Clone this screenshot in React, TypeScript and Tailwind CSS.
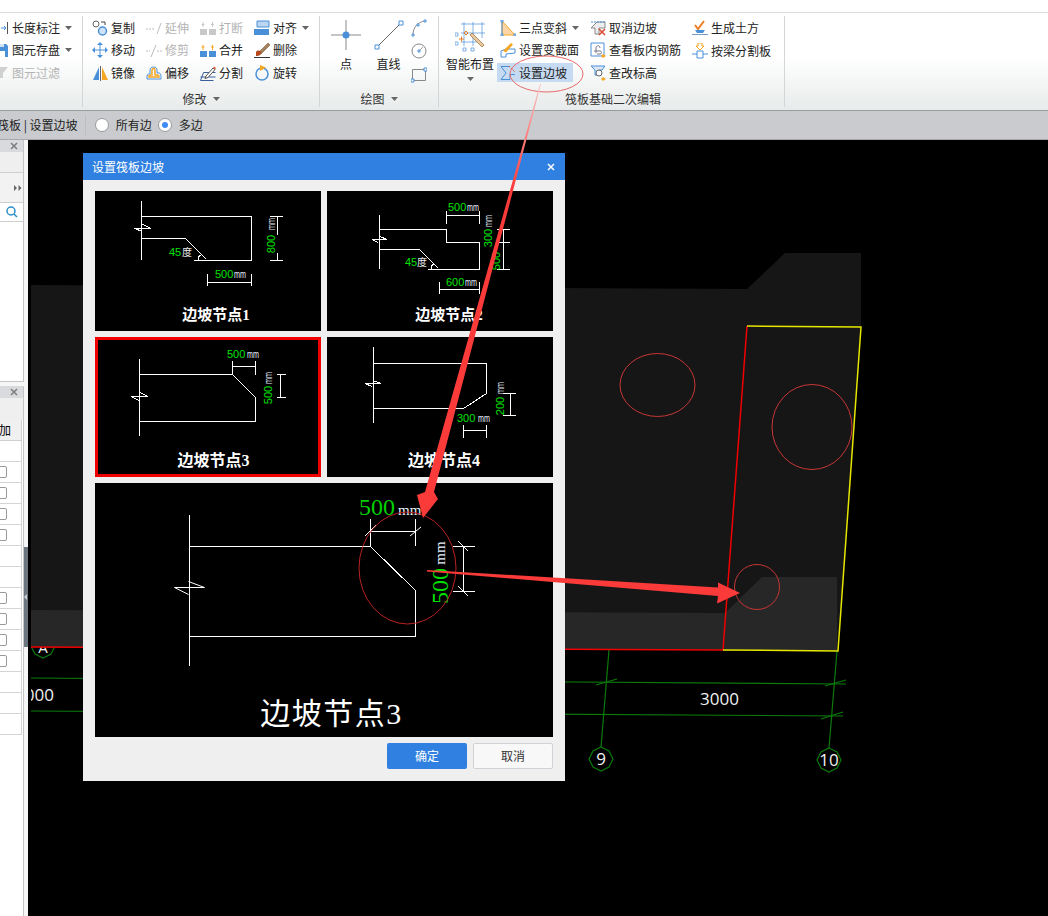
import React from "react";

const BLUE = "#4a90d9";
const ORANGE = "#f5a623";
const GRAY = "#bdbdbd";

const Ic = ({ children }: { children: React.ReactNode }) => (
  <svg viewBox="0 0 16 16" className="w-4 h-4 shrink-0" fill="none" strokeWidth="1">
    {children}
  </svg>
);

const Caret = () => (
  <svg viewBox="0 0 7 4" className="w-[7px] h-[4px] shrink-0">
    <path d="M0 0h7L3.5 4z" fill="#666" />
  </svg>
);

const icons: Record<string, React.ReactNode> = {
  length: (
    <Ic>
      <path d="M8 8h5M11 6l2 2-2 2" stroke={BLUE} />
      <path d="M14.500 2v12" stroke="#555" />
    </Ic>
  ),
  save: (
    <Ic>
      <path d="M1 2h12l2 2v11H1z" fill={BLUE} />
      <path d="M4 9h8v6H4z" fill="#fff" />
      <path d="M5 2h6v3H5z" fill="#cfe2f7" />
    </Ic>
  ),
  filter: (
    <Ic>
      <path d="M1 2h14l-5 6v5H7V8z" fill="#d0d0d0" />
    </Ic>
  ),
  copy: (
    <Ic>
      <circle cx="4" cy="4" r="3" stroke="#666" fill="#fff" />
      <circle cx="10.500" cy="11" r="4" stroke={BLUE} strokeWidth="1.500" fill="#cfe2f7" />
      <path d="M9 2h4v3" stroke="#444" />
    </Ic>
  ),
  move: (
    <Ic>
      <path d="M2 8h12M8 2v12" stroke={BLUE} />
      <path d="M8 0l3 3H5zM8 16l3-3H5zM0 8l3-3v6zM16 8l-3-3v6z" fill={BLUE} />
    </Ic>
  ),
  mirror: (
    <Ic>
      <path d="M7 2v13L1 15z" fill={BLUE} />
      <path d="M8.500 1v15" stroke="#666" />
      <path d="M10 2v13h6z" fill={ORANGE} />
    </Ic>
  ),
  extend: (
    <Ic>
      <path d="M0 9h9" stroke={GRAY} strokeDasharray="2 1" />
      <path d="M11 14L15 3" stroke={GRAY} />
    </Ic>
  ),
  trim: (
    <Ic>
      <path d="M0 9h4M11 9h5" stroke={GRAY} strokeDasharray="2 1" />
      <path d="M5 15L10 3" stroke={GRAY} />
    </Ic>
  ),
  offset: (
    <Ic>
      <path d="M1 14v-3c0-2 2-2 3-2V5c0-4 7-4 7 0v3h2c2 0 2 3 2 6z" stroke={BLUE} />
      <path d="M3 12v-1c0-1 2-1 3-1V5c0-2 3-2 3 0v5h3c1 0 1 1 1 2z" stroke={ORANGE} strokeWidth="1.500" />
    </Ic>
  ),
  breakIc: (
    <Ic>
      <path d="M0 9h7v6H0zM9 9h7v6H9z" fill="#c8c8c8" />
      <path d="M3 2v5M1.500 4.500h3M12.500 2v5M11 4.500h3" stroke="#c8c8c8" />
    </Ic>
  ),
  merge: (
    <Ic>
      <path d="M0 9h7v6H0zM9 9h7v6H9z" fill={BLUE} />
      <path d="M3 3v5M1.500 5h3M12.500 3v5M11 5h3" stroke={ORANGE} />
    </Ic>
  ),
  split: (
    <Ic>
      <path d="M3.500 7.500h12M.5 15.500h13M.5 15.500l3-8M.5 12l15 0" stroke="#3b5e9c" />
      <path d="M6 11l7-8 2 1.500-7 8-3 1z" fill="#fff" stroke="#555" />
      <path d="M13 3l1-1.500 2 1.500-1 1.500z" fill="#e05a3a" />
    </Ic>
  ),
  align: (
    <Ic>
      <path d="M3 1h12v6H3z" fill="#bcd5f0" stroke={BLUE} />
      <path d="M0 9h15v6H0z" fill={BLUE} />
    </Ic>
  ),
  erase: (
    <Ic>
      <path d="M5 10L14 1l2 2-9 9z" fill="#a5805a" stroke="#6a4a2a" strokeWidth="0.500" />
      <path d="M2 10c1-2 4-2 5 0s-1 4-5 4z" fill="#b84a20" />
      <path d="M0 15.500h16" stroke="#333" />
    </Ic>
  ),
  rotate: (
    <Ic>
      <circle cx="8" cy="9" r="6" stroke={BLUE} strokeWidth="1.500" />
      <path d="M6 0l6 2.500L6 6z" fill={ORANGE} />
    </Ic>
  ),
  threePt: (
    <Ic>
      <path d="M2 1v14h13z" fill="#fbd5a5" stroke={ORANGE} />
      <path d="M1 0h2v2H1zM1 14h2v2H1zM14 14h2v2h-2z" fill="#fff" stroke={BLUE} />
      <path d="M2 2v12" stroke={BLUE} />
    </Ic>
  ),
  section: (
    <Ic>
      <path d="M1 15V9l5-2h9v4l-9 1v3z" stroke={BLUE} />
      <path d="M3 9l8-8 2 1.500-7 8z" fill={ORANGE} />
    </Ic>
  ),
  slope: (
    <Ic>
      <path d="M1 1.500h9M1 1.500l5 6.500-5 6.500h9v-5h5" stroke={BLUE} />
      <path d="M9 1l6 6" stroke="#e05a3a" strokeDasharray="2 1" />
    </Ic>
  ),
  cancel: (
    <Ic>
      <path d="M1 8l6-6h8v6H9v6H5V8z" stroke="#888" fill="#eee" />
      <path d="M1 2h14" stroke={BLUE} strokeDasharray="2 1" />
      <path d="M9 9l6 6M15 9l-6 6" stroke="#d9482b" strokeWidth="1.500" />
    </Ic>
  ),
  rebar: (
    <Ic>
      <path d="M1 1h13v13H1z" stroke={BLUE} />
      <path d="M6 11V6c0-3 4-3 4 0M4 9h6c2 0 2 3 0 3H7" stroke="#778" />
      <path d="M13 12l3 2-3 2-2-2z" fill={ORANGE} />
    </Ic>
  ),
  elev: (
    <Ic>
      <path d="M1 1h14l-3 4H9v5H5V5z" stroke={BLUE} fill="#dde8f5" />
      <circle cx="9" cy="8" r="3" stroke="#666" fill="#fff" />
      <path d="M13 12l3 2-3 2-2-2z" fill={ORANGE} />
    </Ic>
  ),
  earth: (
    <Ic>
      <path d="M3 5l3 4 6-8" stroke="#ef7d22" strokeWidth="2" />
      <path d="M3 10h10l-2 3H5z" fill={BLUE} />
      <path d="M0 14.500h16" stroke="#7a99c0" />
    </Ic>
  ),
  beam: (
    <Ic>
      <path d="M6 0h4v3h2l-4 4-4-4h2z" fill="#fff" stroke={ORANGE} />
      <path d="M0 11h16" stroke={BLUE} />
      <path d="M5 8h6v7H5z" fill="#fff" stroke={BLUE} />
    </Ic>
  ),
};

type ItemProps = {
  icon: string;
  label: string;
  off?: boolean;
  caret?: boolean;
  active?: boolean;
};

const Item = ({ icon, label, off, caret, active }: ItemProps) => (
  <div className="h-[22px] last:h-[23px] flex items-center">
    <div
      className={
        active
          ? "flex items-center gap-[3px] h-[19px] w-[76px] -ml-[3px] pl-[3px] bg-[#c6daf1]"
          : "flex items-center gap-[3px]"
      }
    >
      {icons[icon]}
      <span className={off ? "text-[#b4b4b4] whitespace-nowrap" : "whitespace-nowrap"}>{label}</span>
      {caret && (
        <span className="ml-[2px]">
          <Caret />
        </span>
      )}
    </div>
  </div>
);

const Group = ({
  width,
  title,
  caret,
  shift,
  children,
}: {
  width: string;
  title: string;
  caret?: boolean;
  shift?: boolean;
  children: React.ReactNode;
}) => (
  <div className={`${width} my-[3px] flex flex-col border-r border-[#d3d6d6] shrink-0`}>
    <div className="flex h-[68px] mt-[1px]">{children}</div>
    <div className={`flex-1 flex items-center justify-center gap-[6px] pt-[5px] text-[#333] ${shift ? "pl-[3px]" : ""}`}>
      <span>{title}</span>
      {caret && <Caret />}
    </div>
  </div>
);

const Ribbon = () => (
  <div className="h-[98px] flex bg-linear-to-b from-white from-45% to-[#e8ebeb] border-b border-[#9a9c9e] text-xs text-[#222]">
    <Group width="w-[83px]" title="">
      <div className="-ml-[7px]">
        <Item icon="length" label="长度标注" caret />
        <Item icon="save" label="图元存盘" caret />
        <Item icon="filter" label="图元过滤" off />
      </div>
    </Group>
    <Group width="w-[237px]" title="修改" caret>
      <div className="flex pl-[9px]">
        <div className="w-[54px]">
          <Item icon="copy" label="复制" />
          <Item icon="move" label="移动" />
          <Item icon="mirror" label="镜像" />
        </div>
        <div className="w-[54px]">
          <Item icon="extend" label="延伸" off />
          <Item icon="trim" label="修剪" off />
          <Item icon="offset" label="偏移" />
        </div>
        <div className="w-[54px]">
          <Item icon="breakIc" label="打断" off />
          <Item icon="merge" label="合并" />
          <Item icon="split" label="分割" />
        </div>
        <div className="w-[54px]">
          <Item icon="align" label="对齐" caret />
          <Item icon="erase" label="删除" />
          <Item icon="rotate" label="旋转" />
        </div>
      </div>
    </Group>
    <Group width="w-[119px]" title="绘图" caret>
      <div className="flex">
        <div className="w-[50px] flex flex-col items-center pt-[3px] pl-[2px]">
          <svg viewBox="0 0 30 30" className="w-[30px] h-[30px]" fill="none">
            <path d="M0 15h30M15 0v30" stroke="#8a8a8a" />
            <circle cx="15" cy="15" r="3.500" fill={BLUE} />
          </svg>
          <span className="mt-[6px]">点</span>
        </div>
        <div className="w-[37px] flex flex-col items-center pt-[3px]">
          <svg viewBox="0 0 30 30" className="w-[30px] h-[30px]" fill="none">
            <path d="M3 27L27 3" stroke="#666" />
            <path d="M1 25h4v4H1zM25 1h4v4h-4z" fill="#fff" stroke={BLUE} />
          </svg>
          <span className="mt-[6px]">直线</span>
        </div>
        <div className="flex flex-col pl-[4px] pt-[2px] gap-[5px]">
          <svg viewBox="0 0 16 18" className="w-4 h-[18px]" fill="none">
            <path d="M2 16C2 8 7 3 14 2" stroke="#888" />
            <path d="M1 15h2v2H1zM6 5h2v2H6zM13 1h2v2h-2z" fill="#fff" stroke={BLUE} />
          </svg>
          <svg viewBox="0 0 16 18" className="w-4 h-[18px]" fill="none">
            <circle cx="8" cy="9" r="7" stroke="#888" />
            <path d="M8 9l4-4" stroke="#aaa" />
            <path d="M7 8h2v2H7z" fill="#fff" stroke={BLUE} />
          </svg>
          <svg viewBox="0 0 16 18" className="w-4 h-[18px]" fill="none">
            <path d="M1.500 4.500h13v11h-13z" stroke="#888" />
            <path d="M0 14h3v3H0zM13 3h3v3h-3z" fill="#fff" stroke={BLUE} />
          </svg>
        </div>
      </div>
    </Group>
    <Group width="w-[346px]" title="筏板基础二次编辑" shift>
      <div className="flex">
        <div className="w-[58px] flex flex-col items-center pt-[5px] pl-[4px]">
          <svg viewBox="0 0 30 30" className="w-[30px] h-[30px] shrink-0" fill="none">
            <path d="M6 2h24M6 11h24M6 20h16M9 0v24M18 0v24M27 0v16" stroke={BLUE} strokeWidth="0.700" />
            <path d="M0 11h3v3H0zM0 20h3v3H0zM8 26h3v3H8zM16 26h3v3h-3z" stroke={BLUE} strokeWidth="0.700" />
            <path d="M15 13l12 12 2-2-12-12z" fill="#e8c9a0" stroke="#9a6a30" strokeWidth="0.700" />
            <path d="M11 9l2 2-2 2-2-2zM4 17h5M6.500 14.500v5" stroke="#ef7d22" />
          </svg>
          <span className="whitespace-nowrap mt-[4px]">智能布置</span>
          <div className="w-[7px] h-[4px] mt-[5px] shrink-0">
            <Caret />
          </div>
        </div>
        <div className="w-[93px] pl-[3px]">
          <Item icon="threePt" label="三点变斜" caret />
          <Item icon="section" label="设置变截面" />
          <Item icon="slope" label="设置边坡" active />
        </div>
        <div className="w-[102px]">
          <Item icon="cancel" label="取消边坡" />
          <Item icon="rebar" label="查看板内钢筋" />
          <Item icon="elev" label="查改标高" />
        </div>
        <div>
          <Item icon="earth" label="生成土方" />
          <Item icon="beam" label="按梁分割板" />
        </div>
      </div>
    </Group>
  </div>
);

const Radio = ({ on }: { on?: boolean }) => (
  <span className="w-[14px] h-[14px] rounded-full bg-white border border-[#9a9a9a] flex items-center justify-center shrink-0">
    {on && <span className="w-[6px] h-[6px] rounded-full bg-[#3f8cf0]" />}
  </span>
);

const OptionBar = () => (
  <div className="h-[29px] flex items-center bg-[#c9cbce] border-b border-[#a8a8a8] text-xs text-[#222]">
    <span className="-ml-[3px] whitespace-nowrap">筏板 | 设置边坡</span>
    <span className="ml-[7px] w-px h-[20px] bg-[#bcbec0]" />
    <span className="ml-[9px]">
      <Radio />
    </span>
    <span className="ml-[7px]">所有边</span>
    <span className="ml-[6px]">
      <Radio on />
    </span>
    <span className="ml-[7px]">多边</span>
  </div>
);

const Close = ({ color }: { color: string }) => (
  <svg viewBox="0 0 8 8" className="w-2 h-2" fill="none" stroke={color} strokeWidth="1.500">
    <path d="M1 1l6 6M7 1L1 7" />
  </svg>
);

const rowsWithBox = [false, true, true, true, true, false, false, true, true, true, true, false, false, false];

const Sidebar = () => (
  <div className="w-[28px] h-full shrink-0 flex bg-[#f6f6f7] text-xs">
    <div className="w-[24px] flex flex-col overflow-hidden">
      <div className="h-[242px] border-r border-b border-[#c4c4c4] bg-white flex flex-col">
        <div className="h-[12px] bg-[#d9dadd] flex items-center justify-end pr-[5px]">
          <Close color="#7d7d7d" />
        </div>
        <div className="h-[21px] bg-[#efefef] border-b border-[#cfcfcf]" />
        <div className="h-[30px] bg-[#f2f2f2] border-b border-[#cfcfcf] flex items-center justify-end pr-[1px]">
          <svg viewBox="0 0 8 6" className="w-2 h-[6px]">
            <path d="M0 0l3 3-3 3zM4.500 0l3 3-3 3z" fill="#666" />
          </svg>
        </div>
        <div className="h-[19px] border-b border-[#cfcfcf] flex items-center justify-end pr-[5px]">
          <svg viewBox="0 0 12 12" className="w-3 h-3" fill="none" stroke="#2a8fc9" strokeWidth="1.500">
            <circle cx="5" cy="5" r="4" />
            <path d="M8 8l3 3" />
          </svg>
        </div>
      </div>
      <div className="h-[4px]" />
      <div className="flex-1 border-r border-[#c4c4c4] bg-white flex flex-col">
        <div className="h-[12px] bg-[#d9dadd] flex items-center justify-end pr-[5px]">
          <Close color="#7d7d7d" />
        </div>
        <div className="h-[22px] bg-[#efefef]" />
        <div className="h-[21px] bg-[#f0f0f0] border-b border-r border-[#cfcfcf] flex items-center mr-[1px] overflow-hidden">
          <span className="-ml-[1px] whitespace-nowrap">加</span>
        </div>
        {rowsWithBox.map((box, i) => (
          <div key={i} className="h-[21px] border-b border-r border-[#d4d4d4] mr-[1px] flex items-center overflow-hidden">
            {box && <span className="-ml-[5px] w-[12px] h-[12px] rounded-[2px] border border-[#9a9a9a] bg-white shrink-0" />}
          </div>
        ))}
      </div>
    </div>
    <div className="w-[4px] pt-[407px]">
      <div className="h-[100px] bg-[#6b7681] flex items-center">
        <svg viewBox="0 0 4 6" className="w-1 h-[6px]">
          <path d="M3 0v6L0 3z" fill="#c9ced3" />
        </svg>
      </div>
    </div>
  </div>
);

const Model = () => (
  <svg viewBox="28 140 1020 776" className="w-full h-full block" fill="none">
    <g stroke="#0b7a0b" strokeWidth="1.200">
      <path d="M31 678L846 684M31 711L843 716" />
      <path d="M596 685l21-6M825 686l21-6M821 719l22-7" />
      <path d="M609 650L601 747M837 651L829 748" />
      <path d="M601 747l8 4 4 8-4 8-8 4-8-4-4-8 4-8zM829 748l8 4 4 8-4 8-8 4-8-4-4-8 4-8z" />
      <path d="M43 634l8 4 4 8-4 8-8 4-8-4-4-8 4-8z" />
    </g>
    <text x="43" y="653" fontSize="15" fill="#f0f0f0" textAnchor="middle" fontFamily="Open Sans, sans-serif">A</text>
    <path d="M31 285L747 289L785 253H861V327L838 651L723 650L31 647Z" fill="#161616" />
    <path d="M31 610L725 613L762 577H837V651L723 650L31 647Z" fill="#272727" />
    <path d="M31 647L723 650L747 326" stroke="#f00000" strokeWidth="1.500" />
    <path d="M747 326L861 327L838 651L723 650" stroke="#e6e600" strokeWidth="1.500" />
    <g stroke="#c93636" strokeWidth="1">
      <ellipse cx="657.500" cy="385" rx="37.500" ry="31.500" />
      <ellipse cx="812" cy="427" rx="40" ry="42.500" />
      <circle cx="757" cy="587" r="22.500" />
    </g>
    <g fill="#f0f0f0" fontFamily="Open Sans, sans-serif" textAnchor="middle">
      <text x="719.500" y="705" fontSize="17">3000</text>
      <text x="601" y="765" fontSize="17">9</text>
      <text x="829" y="766" fontSize="17">10</text>
      <text x="54" y="701" fontSize="17" textAnchor="end">000</text>
    </g>
    <path d="M28 140h3v776h-3z" fill="#000" />
  </svg>
);

const Mm = ({ x, y, big }: { x: number; y: number; big?: boolean }) =>
  big ? (
    <text x={x} y={y} fill="#e8f0ff" fontSize={15} fontFamily="Liberation Serif, serif">
      mm
    </text>
  ) : (
    <text x={x} y={y} fill="#e8f0ff" fontSize={10} textLength={12} lengthAdjust="spacingAndGlyphs" fontFamily="Liberation Sans, sans-serif">
      mm
    </text>
  );

const Num = ({ x, y, v }: { x: number; y: number; v: string }) => (
  <text x={x} y={y} fill="#00e000" fontSize="11" fontFamily="Liberation Sans, sans-serif">
    {v}
  </text>
);

const RotLabel = ({ x, y, v, big }: { x: number; y: number; v: string; big?: boolean }) => (
  <text
    transform={`rotate(-90 ${x} ${y})`}
    x={x}
    y={y}
    textAnchor="middle"
    fill={v === "mm" ? "#e8f0ff" : "#00e000"}
    fontSize={big ? (v === "mm" ? 15 : 24) : v === "mm" ? 10 : 11}
    textLength={!big && v === "mm" ? 12 : undefined}
    lengthAdjust={!big && v === "mm" ? "spacingAndGlyphs" : undefined}
    fontFamily={big ? "Liberation Serif, serif" : "Liberation Sans, sans-serif"}
  >
    {v}
  </text>
);

const Cap = ({ x, y, v, size }: { x: number; y: number; v: string; size: number }) => (
  <text
    x={x}
    y={y}
    textAnchor="middle"
    fill="#fff"
    fontSize={size}
    fontWeight={size > 20 ? 400 : 700}
    letterSpacing={size > 20 ? 1.500 : 0}
    fontFamily="Liberation Serif, Noto Sans CJK SC, serif"
  >
    {v}
  </text>
);

const Thumb1 = () => (
  <svg viewBox="95 191 226 140" className="w-[226px] h-[140px] block bg-black" fill="none">
    <g stroke="#fff" shapeRendering="crispEdges">
      <path d="M141.500 201v59M141.500 216.500h110v44h-58M141.500 238.500h44l21 21" />
      <path d="M134.500 228h15l-7-4M134.500 228l6 3" />
      <path d="M198 260c0-3 1-4 3-5" />
      <path d="M207.500 274v12M251.500 274v12M207.500 282.500h44M270 216.500h13M270 260.500h13M277.500 216.500v18M277.500 253v7" />
    </g>
    <Num x={215} y={278} v="500" />
    <Mm x={234} y={278} />
    <Num x={169} y={256} v="45" />
    <text x="182" y="256" fill="#eee" fontSize="10" fontFamily="Noto Sans CJK SC, sans-serif">度</text>
    <RotLabel x={275} y={244} v="800" />
    <RotLabel x={275} y={224} v="mm" />
    <Cap x={216} y={320} v="边坡节点1" size={15} />
  </svg>
);

const Thumb2 = () => (
  <svg viewBox="327 191 226 140" className="w-[226px] h-[140px] block bg-black" fill="none">
    <g stroke="#fff" shapeRendering="crispEdges">
      <path d="M379.500 215v54M379.500 229.500h67v13h33v27h-52M379.500 249.500h40l19 19" />
      <path d="M372 239.500h15l-7-3M372 239.500l6 3" />
      <path d="M431 269c0-3 1-4 3-5" />
      <path d="M446.500 211v13M479.500 211v13M446.500 215.500h33M497 229.500h13M497 242.500h13M497 269.500h13M503.500 229.500v40" />
      <path d="M439.500 282v12M479.500 282v12M439.500 289.500h40" />
    </g>
    <Num x={448} y={211} v="500" />
    <Mm x={467} y={211} />
    <Num x={446} y={286} v="600" />
    <Mm x={465} y={286} />
    <Num x={405} y={266} v="45" />
    <text x="417" y="266" fill="#eee" fontSize="10" fontFamily="Noto Sans CJK SC, sans-serif">度</text>
    <RotLabel x={492} y={238} v="300" />
    <RotLabel x={492} y={221} v="mm" />
    <RotLabel x={500} y={261} v="500" />
    <Cap x={449} y={320} v="边坡节点2" size={15} />
  </svg>
);

const Thumb3 = () => (
  <svg viewBox="98 340 220 134" className="w-[220px] h-[134px] block bg-black" fill="none">
    <g stroke="#fff" shapeRendering="crispEdges">
      <path d="M139.500 359v77M139.500 374.500h93l23 23v24h-116" />
      <path d="M131 396.500h17l-8-4M131 396.500l8 4" />
      <path d="M232.500 361v14M255.500 361v14M232.500 366.500h23M277 374.500h9M277 397.500h9M280.500 374.500v23" />
    </g>
    <Num x={227} y={358} v="500" />
    <Mm x={247} y={358} />
    <RotLabel x={272} y={395} v="500" />
    <RotLabel x={272} y={378} v="mm" />
    <Cap x={213.500} y={466} v="边坡节点3" size={16} />
  </svg>
);

const Thumb4 = () => (
  <svg viewBox="327 337 226 140" className="w-[226px] h-[140px] block bg-black" fill="none">
    <g stroke="#fff" shapeRendering="crispEdges">
      <path d="M373.500 347v76M373.500 363.500h113v30l-23 15h-90" />
      <path d="M365 383.500h16l-8-3M365 383.500l7 3" />
      <path d="M463.500 425v13M486.500 425v13M463.500 430.500h23M503 393.500h13M503 415.500h13M510.500 393.500v22" />
    </g>
    <Num x={457} y={422} v="300" />
    <Mm x={478} y={422} />
    <RotLabel x={504} y={406} v="200" />
    <RotLabel x={504} y={388} v="mm" />
    <Cap x={444} y={466} v="边坡节点4" size={16} />
  </svg>
);

const BigPreview = () => (
  <svg viewBox="95 483 458 254" className="w-[458px] h-[254px] block bg-black" fill="none">
    <g stroke="#fff" shapeRendering="crispEdges">
      <path d="M189.500 515v151M189.500 546.500h181l45 44v46h-226" />
      <path d="M370.500 519v27M415.500 519v27M370.500 531.500h45M453 546.500h22M453 591.500h22M463.500 546.500v45" />
    </g>
    <g stroke="#fff">
      <path d="M174.500 587.500h30l-16-6M174.500 587.500l14 7" />
      <path d="M365 536l11-11M410 536l11-9M458 541l10 10M458 586l10 10" />
    </g>
    <text x="359" y="515" fill="#00d000" fontSize="24" fontFamily="Liberation Serif, serif">500</text>
    <Mm x={398} y={515} big />
    <RotLabel x={448} y={586} v="500" big />
    <RotLabel x={445} y={553} v="mm" big />
    <Cap x={331.500} y={724} v="边坡节点3" size={30} />
  </svg>
);

const Dialog = () => (
  <div className="absolute left-[83px] top-[13px] w-[482px] h-[628px] bg-[#efefef] flex flex-col">
    <div className="h-[27px] bg-[#2f80e0] text-white text-xs flex items-center justify-between pl-[9px] pr-[10px]">
      <span>设置筏板边坡</span>
      <Close color="#fff" />
    </div>
    <div className="px-[12px] pt-[11px] grid grid-cols-[226px_226px] gap-[6px]">
      <Thumb1 />
      <Thumb2 />
      <div className="border-[3px] border-[#f00000]">
        <Thumb3 />
      </div>
      <Thumb4 />
      <div className="col-span-2">
        <BigPreview />
      </div>
    </div>
    <div className="flex justify-end gap-[6px] px-[12px] mt-[6px] text-xs">
      <button className="w-[80px] h-[26px] rounded-[2px] bg-[#2f80e0] text-white">确定</button>
      <button className="w-[80px] h-[26px] rounded-[2px] bg-[#f8f8f8] border border-[#cfd3d8] text-[#333]">取消</button>
    </div>
  </div>
);

// red marks someone drew over the screenshot
const Annotations = () => (
  <svg viewBox="0 0 1048 916" className="absolute inset-0 w-[1048px] h-[916px] pointer-events-none" fill="none">
    <defs>
      <linearGradient id="fade" gradientUnits="userSpaceOnUse" x1="540" y1="84" x2="515" y2="190">
        <stop offset="0" stopColor="#f8c4c4" />
        <stop offset="1" stopColor="#fb3a3a" />
      </linearGradient>
    </defs>
    <ellipse cx="546.500" cy="74" rx="36.500" ry="18" stroke="#e76a6a" />
    <ellipse cx="407.500" cy="568" rx="48.500" ry="56" stroke="#b92222" />
    <path d="M540 84L541 84L434 492L438 499L423 518L417 495L425 492Z" fill="url(#fade)" />
    <path d="M427 570L718 587.500L718 582.500L740 593L717 603.500L718 596L427 571.500Z" fill="#fb3a3a" />
  </svg>
);

export default function App() {
  return (
    <div className="relative w-[1048px] h-[916px] overflow-hidden bg-black [font-family:'Noto_Sans_CJK_SC',sans-serif]">
      <div className="h-[13px] bg-white border-b border-[#dcdcdc]" />
      <Ribbon />
      <OptionBar />
      <div className="relative flex h-[776px]">
        <Sidebar />
        <div className="flex-1 bg-black">
          <Model />
        </div>
        <Dialog />
      </div>
      <Annotations />
    </div>
  );
}
